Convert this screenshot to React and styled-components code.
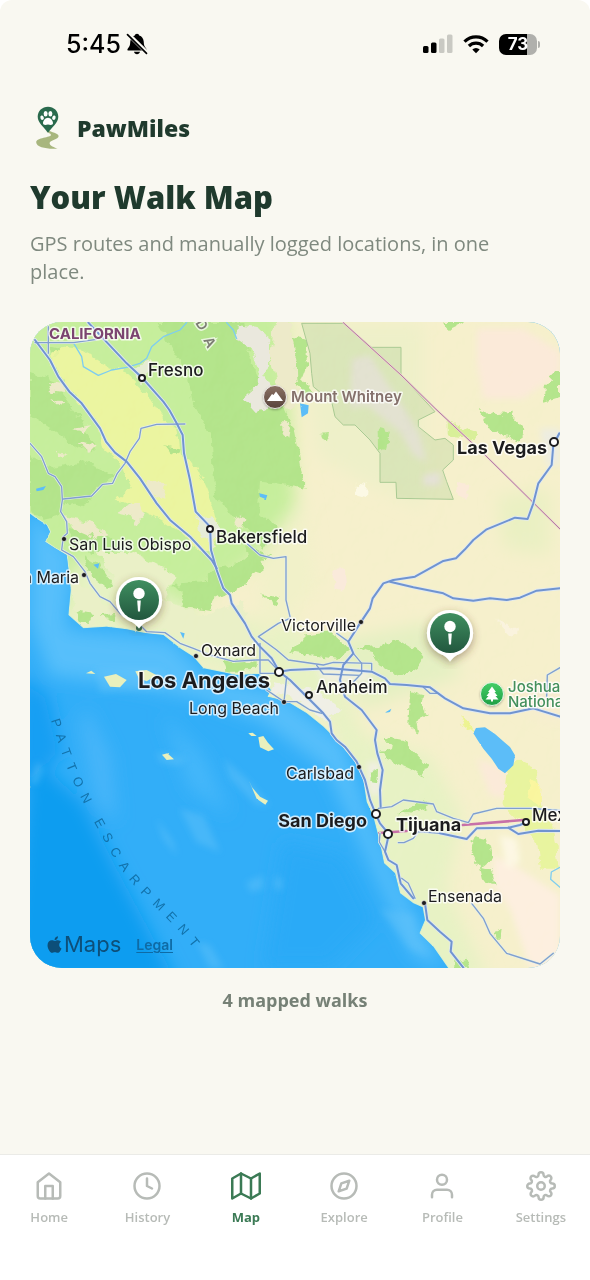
import React from "react";
import styled, { createGlobalStyle } from "styled-components";
import { FiHome, FiClock, FiMap, FiCompass, FiUser, FiSettings } from "react-icons/fi";
import { FaApple } from "react-icons/fa";

const GlobalStyle = createGlobalStyle`
  *, *::before, *::after { box-sizing: border-box; }
  body {
    margin: 0;
    background: #fff;
    color: #1f3a2d;
    font-family: "Open Sans", "Noto Sans", sans-serif;
  }
`;

const Screen = styled.div`
  min-height: 100vh;
  display: flex;
  flex-direction: column;
  background: #f9f8f1;
  border-radius: 12px 12px 0 0;
`;

const StatusBar = styled.div`
  display: flex;
  justify-content: space-between;
  align-items: center;
  height: 88px;
  padding: 0 50px 0 66px;
  color: #000;
  font-family: Inter, sans-serif;
`;

const StatusGroup = styled.div`
  display: flex;
  align-items: center;
  gap: ${(p) => p.$gap}px;
`;

const Clock = styled.time`
  font-size: 25px;
  line-height: 32px;
  font-weight: 500;
`;

const Battery = styled.div`
  display: flex;
  align-items: center;
  gap: 1px;

  &::after {
    content: "";
    width: 2px;
    height: 7px;
    border-radius: 0 3px 3px 0;
    background: #b0b0ac;
  }
`;

const BatteryBody = styled.div`
  width: 38px;
  height: 21px;
  border-radius: 7px;
  background: linear-gradient(to right, #000 73%, #b0b0ac 73%);
  color: #fff;
  font-size: 17px;
  line-height: 21px;
  font-weight: 700;
  text-align: center;
`;

const Main = styled.main`
  flex: 1;
  display: flex;
  flex-direction: column;
  padding: 16px 30px 0;
`;

const Brand = styled.div`
  display: flex;
  align-items: center;
  gap: 11px;
  height: 48px;
`;

const BrandName = styled.span`
  font-size: 23px;
  line-height: 32px;
  font-weight: 800;
`;

const Title = styled.h1`
  margin: 24px 0 0;
  font-size: 31px;
  line-height: 42px;
  font-weight: 800;
`;

const Lead = styled.p`
  margin: 12px 0 0;
  padding-right: 24px;
  color: #7f897f;
  font-size: 20px;
  line-height: 28px;
`;

const MapCard = styled.section`
  position: relative;
  margin-top: 36px;
  border-radius: 32px;
  overflow: hidden;
  aspect-ratio: 530 / 646;
  background: #2caaf7;
`;

const MapSvg = styled.svg`
  display: block;
  width: 100%;
  height: 100%;
`;

const PlaceText = styled.text`
  font-family: Inter, sans-serif;
  font-size: ${(p) => p.$size}px;
  font-weight: ${(p) => p.$weight};
  fill: ${(p) => p.$color || "#1c1c1e"};
  stroke: rgba(255, 255, 255, 0.75);
  stroke-width: 3px;
  stroke-linejoin: round;
  paint-order: stroke;
`;

const SeaText = styled.text`
  font-family: "Liberation Sans", sans-serif;
  font-size: 13px;
  letter-spacing: 8px;
  fill: #1272ab;
`;

const RangeText = styled.text`
  font-family: Inter, sans-serif;
  font-size: 14px;
  font-weight: 600;
  fill: #7d7d74;
  stroke: rgba(255, 255, 255, 0.7);
  stroke-width: 3px;
  paint-order: stroke;
`;

const PinButton = styled.button`
  position: absolute;
  left: ${(p) => p.$left}%;
  top: ${(p) => p.$top}%;
  width: 64px;
  height: 68px;
  margin: -32px 0 0 -32px;
  padding: 0;
  border: 0;
  background: none;
`;

const Attribution = styled.div`
  position: absolute;
  left: 15px;
  bottom: 8px;
  display: flex;
  align-items: center;
  gap: 15px;
  color: #0d4f79;
  font-family: Inter, sans-serif;
`;

const MapsMark = styled.span`
  display: flex;
  align-items: center;
  font-size: 22px;
  line-height: 32px;
`;

const LegalLink = styled.a`
  margin-top: 2px;
  color: #0f6ba5;
  font-size: 14px;
  line-height: 20px;
  font-weight: 600;
  text-decoration: underline;
  text-underline-offset: 2px;
`;

const Count = styled.p`
  margin: 20px 0 24px;
  color: #768176;
  font-size: 18px;
  line-height: 24px;
  font-weight: 700;
  text-align: center;
`;

const TabBar = styled.nav`
  display: grid;
  grid-template-columns: repeat(6, 1fr);
  height: 126px;
  padding-top: 16px;
  border-top: 1px solid #ebebe7;
  background: #fff;
`;

const Tab = styled.a`
  display: flex;
  flex-direction: column;
  align-items: center;
  gap: 7px;
  color: ${(p) => (p.$active ? "#3b7a55" : "#b7bbb7")};
  font-size: 13px;
  line-height: 18px;
  font-weight: ${(p) => (p.$active ? 700 : 600)};
  text-decoration: none;
`;

function BellOff() {
  return (
    <svg width="22" height="22" viewBox="0 0 22 22" aria-hidden="true">
      <path
        d="M11 .8c1.200 0 2 .7 2.200 1.700 2.700.8 4.300 3 4.500 6 .2 3.700.7 5.200 2.400 6.900.9.9.6 2.100-.7 2.100H2.600c-1.300 0-1.600-1.200-.7-2.100 1.700-1.700 2.200-3.200 2.400-6.900.2-3 1.800-5.200 4.500-6C9 1.500 9.800.8 11 .8ZM8 18.800h6c-.3 1.600-1.500 2.500-3 2.500s-2.700-.9-3-2.500Z"
        fill="#000"
      />
      <path d="M1.600.6 21.600 20.200" stroke="#f9f8f1" strokeWidth="4.200" />
      <path d="M1.500 1.700 20.500 20.300" stroke="#000" strokeWidth="1.700" strokeLinecap="round" />
    </svg>
  );
}

function Signal() {
  return (
    <svg width="30" height="20" viewBox="0 0 30 20" aria-hidden="true">
      <rect x="0" y="12" width="5.500" height="7" rx="1.500" />
      <rect x="8" y="8.500" width="5.500" height="10.500" rx="1.500" />
      <rect x="16" y="4.500" width="5.500" height="14.500" rx="1.500" fill="#c9c9c3" />
      <rect x="24" y="0.500" width="5.500" height="18.500" rx="1.500" fill="#c9c9c3" />
    </svg>
  );
}

function Wifi() {
  return (
    <svg width="26" height="20" viewBox="0 0 26 20" fill="none" stroke="#000" strokeWidth="3.200" aria-hidden="true">
      <path d="M1.500 7.600a16.400 16.400 0 0 1 23 0" />
      <path d="M5.900 12a10.100 10.100 0 0 1 14.200 0" />
      <path d="M9.300 15.400a5.300 5.300 0 0 1 7.400 0L13 19.200Z" fill="#000" stroke="none" />
    </svg>
  );
}

function Logo() {
  return (
    <svg width="36" height="44" viewBox="0 0 36 44" aria-hidden="true">
      <path
        d="M18 24c3 2.500 10.600 3 10.600 6.200 0 3-8.800 4-9 6.800-.2 2.800 5 4.500 8 5.600-9.500.8-21.400-1-21.400-6.300C6.200 31.500 21 31.500 21 29c0-1.800-3.800-2.200-4.500-4Z"
        fill="#a8b67e"
      />
      <path d="M18 .8c5.800 0 10.300 4.200 10.300 10 0 6.300-6.300 10.200-10.300 16-4-5.800-10.300-9.700-10.300-16C7.700 5 12.200.8 18 .8Z" fill="#2a6a4d" />
      <g fill="#fff">
        <ellipse cx="15.600" cy="7.800" rx="2" ry="2.700" />
        <ellipse cx="20.400" cy="7.800" rx="2" ry="2.700" />
        <ellipse cx="12.100" cy="11.700" rx="1.700" ry="2.200" transform="rotate(-18 12.100 11.700)" />
        <ellipse cx="23.900" cy="11.700" rx="1.700" ry="2.200" transform="rotate(18 23.900 11.700)" />
        <path d="M18 11.800c2.600 0 5 3.200 5 5.200 0 2.400-2.700 2-5 1.500-2.300.5-5 .9-5-1.500 0-2 2.400-5.200 5-5.200Z" />
      </g>
    </svg>
  );
}

function Pin({ label, left, top }) {
  return (
    <PinButton type="button" aria-label={label} $left={left} $top={top}>
      <svg width="64" height="68" viewBox="0 0 64 68" aria-hidden="true">
        <g filter="url(#pinShadow)">
          <path d="M32 9a23 23 0 0 1 8.500 44.400c-3.200 1.300-5.500 3-8.500 7-3-4-5.300-5.700-8.500-7A23 23 0 0 1 32 9Z" fill="#fff" />
        </g>
        <circle cx="32" cy="32" r="20" fill="url(#pinFill)" />
        <circle cx="32" cy="25.500" r="5.700" fill="#fff" />
        <path d="M30.200 32.600h3.600l-.8 11h-2Z" fill="#fff" />
      </svg>
    </PinButton>
  );
}

const roads = [
  "M15 54 60 114 85 164 118 209 155 244 210 319 228 359 255 392 290 419 330 469 380 544 420 594 480 644 545 714 560 739",
  "M175 2 290 124 338 169 400 239 418 264 440 304 458 339 462 394 480 474 497 569 540 614 543 684 560 744 580 799 600 819 605 844 645 904 665 944 690 974 725 1009 748 1049",
  "M1588 334 1570 369 1565 429 1525 484 1510 544 1493 591 1455 587 1370 622 1330 654 1305 682 1278 709 1240 717 1155 764 1090 774 1060 784 1028 829 1020 859 990 904 955 959 970 994 940 1029 930 1074 945 1124 995 1164 1040 1224 1035 1254 1042 1294 1058 1344 1050 1404 1052 1454",
  "M1080 779 1150 796 1240 814 1270 829 1330 836 1380 829 1430 834 1470 827 1520 806 1590 799",
  "M748 1049 780 1044 900 1039 1025 1049 1065 1069 1080 1086 1130 1089 1200 1096 1245 1129 1300 1159 1380 1174 1440 1174 1510 1159 1590 1184",
  "M748 1049 780 1074 850 1144 880 1174 900 1199 905 1234 920 1254 945 1274 980 1319 1005 1374 1020 1434 1037 1476 1050 1504 1075 1534",
  "M1230 1534 1310 1551 1340 1519 1435 1517 1470 1509 1488 1501",
  "M1435 1517 1465 1536 1525 1526 1590 1527",
  "M1075 1544 1065 1589 1075 1614 1100 1629 1112 1684 1150 1729",
  "M1185 1744 1192 1794 1230 1829 1265 1859 1262 1889 1300 1937",
];

const minorRoads = [
  "M15 62H130L200 52M55 14V94",
  "M465 306 380 307 333 319 328 349 300 389 285 424 262 454 248 484 218 487 185 522 100 531",
  "M0 364 35 404 55 454 75 464 95 494 97 534 92 569 110 599 112 634 100 644 95 684 130 704 165 749 180 784 210 824 240 839 270 874 330 909 350 929 405 932 450 964 490 979 540 999 610 1018 680 1014 715 1014 748 1049",
  "M650 664 690 699 730 709 768 704 768 834 780 884",
  "M780 889 745 904 685 944 740 984 775 1014 880 1029 910 1021 1025 1024V1044",
  "M690 964V1054H748M770 1064 762 1139 800 1139 840 1164 875 1174M710 1104 762 1139",
  "M920 934 955 959M970 994 995 1024V1054L970 1080M860 1030 880 1056 990 1060",
  "M1180 1096 1200 1114H1220",
  "M1550 1124 1552 1059 1590 1037",
  "M1045 1459 1085 1454 1120 1434 1210 1446 1220 1469 1270 1489 1315 1502 1330 1476 1400 1459 1500 1459 1590 1465",
  "M1050 1534 1048 1560 1065 1589M1115 1669 1135 1684 1155 1729",
  "M1105 1562H1122L1150 1549 1165 1529 1230 1534",
  "M1325 1744 1360 1789 1380 1834 1430 1894 1530 1926 1570 1894",
];

const rivers = [
  "M130 62 155 104 160 134 205 160 245 144 290 136 330 124 350 109 365 74 400 44 450 24 470 2",
  "M590 2 610 24 620 50",
  "M1590 1636 1564 1650 1562 1672 1590 1696",
];

const groves = [
  "M380 0H640L650 60 670 140 700 200 760 255 790 320 800 370 812 440 830 500 750 485 690 480 684 560 740 620 700 680 640 600 600 580 560 520 552 470 545 340 488 240 470 150Z",
  "M780 40 830 50 830 130 815 170 850 210 820 230 790 150Z",
  "M0 150 60 170 140 280 190 360 200 390 130 370 80 330 0 280Z",
  "M0 400 70 440 160 420 260 460 240 480 200 500 160 560 120 540 90 580 40 590 0 565Z",
  "M110 620 170 630 240 640 290 680 240 690 180 690 130 660Z",
  "M60 70 100 80 96 100 66 96Z",
  "M160 700 210 730 250 790 230 800 180 760Z",
  "M430 790 520 780 560 740 620 730 680 680 700 740 620 800 560 830 540 864 450 850 460 820Z",
  "M650 670 720 700 690 730 660 710Z",
  "M690 820 750 824 740 850Z",
  "M780 990 830 940 900 930 960 980 920 1010 840 1000Z",
  "M980 980 1050 970 1110 954 1180 1000 1160 1030 1110 1064 1050 1030 1030 996Z",
  "M1140 1110 1180 1120 1175 1150 1190 1180 1160 1200 1165 1230 1135 1210Z",
  "M580 1020 680 1018 680 1046 590 1050Z",
  "M140 870 190 880 180 900 150 894Z",
  "M210 880 260 876 250 894Z",
  "M400 370 450 380 440 400 420 396Z",
  "M1060 1244 1120 1254 1150 1290 1190 1330 1180 1370 1140 1340 1070 1310 1050 1290 1090 1280Z",
  "M1020 1350 1050 1340 1048 1384 1018 1380Z",
  "M1100 1480 1190 1430 1200 1450 1140 1480Z",
  "M1320 1590 1340 1544 1370 1550 1385 1610 1350 1640Z",
  "M1350 1640 1390 1650 1400 1690 1360 1680Z",
  "M1390 1830 1415 1824 1412 1850 1394 1850Z",
  "M1270 1920 1310 1910 1320 1938H1270Z",
  "M1350 260 1400 280 1440 275 1480 320 1470 360 1420 340 1380 320Z",
  "M1590 145 1545 190 1540 240 1590 225Z",
  "M1230 0H1310L1260 24Z",
  "M865 338 900 336 894 358Z",
];

const tanPatches = [
  "M735 0 780 0 800 120 805 250 770 260 740 180 720 100Z",
  "M50 180 100 190 96 210 60 204Z",
  "M60 230 100 240 90 252Z",
  "M130 320 180 310 170 334Z",
  "M140 360 200 370 180 390Z",
  "M80 390 115 396 84 408Z",
  "M100 585 180 600 240 640 200 650 130 620Z",
  "M260 570 325 540 345 580 320 610 300 580Z",
  "M355 480 410 484 400 530 350 510Z",
  "M760 290 780 310 775 350 760 330Z",
  "M620 580 650 590 640 620 610 610Z",
];

const islands = [
  "M222 1064 258 1056 290 1074 270 1096 240 1094Z",
  "M168 1054 184 1046 196 1056Z",
  "M316 1048 350 1044 380 1060 350 1078 326 1068Z",
  "M396 1298 412 1294 432 1312 410 1314Z",
  "M685 1246 700 1242 714 1262 732 1282 715 1288 690 1276Z",
  "M655 1234 668 1232 680 1242 664 1242Z",
  "M657 1376 666 1396 690 1424 714 1436 706 1448 680 1430Z",
];

const places = [
  ["CALIFORNIA", 19, 17, 15, 700, "start", "#7b4470"],
  ["Fresno", 118, 54, 17, 500],
  ["Bakersfield", 186, 221, 17, 500],
  ["Mount Whitney", 261, 80, 15, 600, "start", "#85716c"],
  ["Las Vegas", 517, 132, 18, 700, "end"],
  ["San Luis Obispo", 39, 228, 16, 400],
  ["Santa Maria", 49, 261, 16, 400, "end"],
  ["Victorville", 326, 309, 16, 400, "end"],
  ["Oxnard", 171, 334, 16, 400],
  ["Los Angeles", 240, 366, 22, 700, "end"],
  ["Anaheim", 286, 371, 17, 500],
  ["Long Beach", 249, 392, 16, 400, "end"],
  ["Carlsbad", 324, 457, 16, 400, "end"],
  ["San Diego", 337, 505, 18, 700, "end"],
  ["Tijuana", 366, 509, 18, 700],
  ["Mexicali", 502, 499, 17, 500],
  ["Ensenada", 398, 580, 16, 400],
  ["Joshua Tree", 478, 370, 15, 500, "start", "#43905c"],
  ["National Park", 478, 385, 15, 500, "start", "#43905c"],
];

const rings = [[112, 56, 3], [180, 207, 3], [524, 120, 4], [249, 350, 4], [279, 373, 3], [346, 492, 4], [358, 512, 4], [496, 500, 3]];
const dots = [[34, 217], [54, 253], [331, 300], [166, 334], [254, 380], [329, 445], [394, 581]];

const coast =
  "M0 575 20 590 50 609 60 629 45 659 75 679 110 699 118 764 122 804 115 879 160 919 230 914 290 922 340 932 400 939 450 979 490 1004 520 1039 620 1059 690 1056 722 1104 712 1124 770 1138 830 1174 880 1214 920 1254 975 1320 1000 1374 1010 1440 1030 1484 1048 1554 1062 1624 1095 1654 1110 1714 1150 1744 1178 1756 1185 1794 1168 1834 1210 1874 1255 1939H0Z";

function RegionMap() {
  return (
    <MapSvg viewBox="0 0 530 646" preserveAspectRatio="xMidYMid slice" role="img" aria-label="Map of Southern California">
      <defs>
        <linearGradient id="pinFill" x1="0" y1="0" x2="0" y2="1">
          <stop offset="0" stopColor="#3f8f60" />
          <stop offset="1" stopColor="#22573e" />
        </linearGradient>
        <linearGradient id="parkBadge" x1="0" y1="0" x2="0" y2="1">
          <stop offset="0" stopColor="#45cf68" />
          <stop offset="1" stopColor="#1f9f45" />
        </linearGradient>
        <linearGradient id="peakBadge" x1="0" y1="0" x2="0" y2="1">
          <stop offset="0" stopColor="#8a7164" />
          <stop offset="1" stopColor="#59443b" />
        </linearGradient>
        <filter id="pinShadow" x="-30%" y="-30%" width="160%" height="170%">
          <feDropShadow dx="0" dy="3" stdDeviation="4" floodColor="#5c3b20" floodOpacity="0.45" />
        </filter>
        <filter id="badgeShadow" x="-30%" y="-30%" width="160%" height="170%">
          <feDropShadow dx="0" dy="1" stdDeviation="1" floodOpacity="0.3" />
        </filter>
        <filter id="soft" x="-30%" y="-30%" width="160%" height="160%">
          <feGaussianBlur stdDeviation="26" />
        </filter>
        <filter id="softer" x="-30%" y="-30%" width="160%" height="160%">
          <feGaussianBlur stdDeviation="10" />
        </filter>
        <filter id="ragged" x="-5%" y="-5%" width="110%" height="110%">
          <feTurbulence type="fractalNoise" baseFrequency="0.035" numOctaves="3" seed="4" />
          <feDisplacementMap in="SourceGraphic" scale="30" xChannelSelector="R" yChannelSelector="G" />
        </filter>
        <filter id="coastEdge" x="-5%" y="-5%" width="110%" height="110%">
          <feTurbulence type="fractalNoise" baseFrequency="0.080" numOctaves="2" seed="9" />
          <feDisplacementMap in="SourceGraphic" scale="5" xChannelSelector="R" yChannelSelector="G" />
        </filter>
        <filter id="relief" x="0" y="0" width="100%" height="100%">
          <feTurbulence type="fractalNoise" baseFrequency="0.014 0.010" numOctaves="4" seed="12" result="noise" />
          <feDiffuseLighting in="noise" surfaceScale="14" lightingColor="#ffffff">
            <feDistantLight azimuth="225" elevation="60" />
          </feDiffuseLighting>
        </filter>
        <clipPath id="seaClip">
          <path d={coast} />
        </clipPath>
        <path id="escarpment" d="M21 398C30 426 36 446 48 470S70 510 80 529 106 567 124 584 150 609 176 642" />
      </defs>

      <g transform="scale(0.33333)">
        <rect width="1590" height="1938" fill="#f5efc9" />
        <g filter="url(#soft)">
          <path d="M-60 -60H760L800 600 700 700 400 900 100 880 -60 600Z" fill="#c3ed97" />
          <path d="M300 740 500 880 780 900 900 1000 1000 1240 1200 1300 1300 1480 1250 1700 1380 1980H1140L900 1200 600 1060 100 900 130 720Z" fill="#e6f1c1" />
          <path d="M680 700 820 520 860 800 700 960Z" fill="#f0f0c6" />
          <path d="M800 0H1180V560L1000 480 860 400Z" fill="#edefc6" />
          <path d="M900 960 1200 900 1300 1060 1000 1160Z" fill="#e3efbf" />
          <path d="M1400 520 1560 500V700L1420 680Z" fill="#e9efc0" />
          <path d="M1490 1090H1590V1200L1480 1150Z" fill="#f8ead0" />
        </g>
        <g filter="url(#softer)">
          <path d="M1340 20H1480L1590 90V150L1520 200 1480 230H1360L1340 120Z" fill="#fbe9d7" />
          <path d="M1340 1310 1420 1340 1440 1430 1380 1420Z" fill="#fbe9d7" />
          <path d="M1390 1600 1470 1640 1590 1720V1938H1500L1440 1760 1390 1690Z" fill="#fdeedd" />
          <path d="M1410 1540 1460 1550 1470 1620 1430 1640Z" fill="#fdf7e2" />
          <path d="M1010 1320H1050V1420H1020Z" fill="#efeee0" />
          <path d="M1530 320H1590V430H1550Z" fill="#ececdf" />
          <path d="M860 1040H1020V1080H880Z" fill="#efefde" />
        </g>
        <g filter="url(#ragged)">
          <g fill="#b0e386">{groves.map((d) => <path key={d} d={d} />)}</g>
          <path d="M95 74 150 80 215 124 290 154 350 214 390 280 440 320 450 400 500 434 530 500 550 560 570 640 540 690 500 690 460 640 400 600 330 560 260 530 300 500 270 420 215 370 200 300 120 210 60 110Z" fill="#eaf49b" />
          <path d="M200 690 300 690 400 740 440 770 400 830 520 880 640 840 680 1010 540 1000 420 930 240 880 270 800Z" fill="#e9efc4" />
          <path d="M120 760 200 820 260 880 180 910 130 860Z" fill="#e9efc4" />
          <path d="M400 370 450 380 440 400 420 396ZM140 870 190 880 180 900 150 894ZM210 880 260 876 250 894Z" fill="#b0e386" />
          <g fill="#ece9c6">{tanPatches.map((d) => <path key={d} d={d} />)}</g>
          <path d="M1430 1344 1460 1314 1520 1344 1535 1454 1570 1514 1590 1640 1530 1640 1520 1554 1500 1534 1420 1454Z" fill="#e7f39a" />
          <path d="M1500 1370 1535 1400 1530 1450 1490 1430Z" fill="#faf59a" />
          <path d="M1250 300 1340 330 1335 350 1250 340Z" fill="#d6ee93" />
          <path d="M1290 1180 1320 1200 1340 1240 1300 1210Z" fill="#ecf38d" />
          <path d="M620 10 700 20 720 60 720 130 700 160 730 210 715 260 680 270 640 225 680 190 690 140 665 80 620 50Z" fill="#e9e7db" />
          <path d="M325 120 365 112 360 150 335 190 315 150Z" fill="#e5ebd2" />
          <path d="M500 590 540 580 570 620 550 670 510 640Z" fill="#e5ebd6" />
          <path d="M910 744 945 740 948 800 914 804Z" fill="#fae9d9" />
          <path d="M1395 890 1460 920 1445 944Z" fill="#faf2dc" />
          <path d="M980 482 1012 486 1008 528 980 520Z" fill="#fcf9e4" />
          <path d="M1280 480 1316 486 1310 530 1280 520Z" fill="#fbe9d7" />
          <path d="M730 1080 780 1090 850 1100 930 1160 890 1200 820 1150 770 1120 720 1110Z" fill="#efeee4" />
        </g>
        <path
          d="M815 4H940L1025 76H1113V159L1215 269 1165 294V314L1215 354 1245 349 1270 369V414L1238 444 1250 479 1270 532 1100 529 1098 481H1050V394L1020 354 975 309H940L915 284 905 239 850 194 845 154 840 94Z"
          fill="#b9d59b"
          fillOpacity="0.4"
          stroke="#a5c78e"
          strokeWidth="3"
        />
        <g filter="url(#softer)" fill="#e3dfd5">
          <path d="M965 110 1020 100 1070 180 1130 270 1170 340 1190 420 1150 400 1110 330 1010 250 960 260Z" fillOpacity="0.8" />
          <path d="M1180 460 1230 450 1230 490 1180 490Z" />
        </g>
        <path d="M1043 330 1068 312 1078 340 1068 380 1044 388Z" fill="#b0e386" filter="url(#ragged)" />
        <rect width="1590" height="1938" filter="url(#relief)" opacity="0.13" style={{ mixBlendMode: "soft-light" }} />

        <path d={coast} fill="#d7efd0" stroke="#d7efd0" strokeWidth="6" filter="url(#coastEdge)" />
        <path d={coast} fill="#31aef8" filter="url(#coastEdge)" />
        <g clipPath="url(#seaClip)">
          <g filter="url(#soft)">
            <path d="M0 560 130 700 110 920 420 950 540 1070 740 1110 940 1260 1020 1500 1120 1720 1240 1938 1150 1900 1010 1600 890 1340 700 1200 520 1130 300 1090 60 1060 0 900Z" fill="#56bffb" />
            <path d="M0 1300 160 1440 260 1640 440 1980H-60Z" fill="#0b9df0" />
            <path d="M-40 1050 60 1120 100 1300 -40 1400Z" fill="#189ff3" />
            <path d="M400 1180 520 1300 600 1480 480 1400Z" fill="#45b7fa" />
            <path d="M760 1560 940 1600 1040 1800 900 1938H700Z" fill="#29aaf7" />
            <path d="M170 1160 240 1300 260 1500 200 1440 150 1200Z" fill="#48b6f9" />
          </g>
          <g filter="url(#softer)" fill="#68c5fb" fillOpacity="0.4">
            <path d="M450 1460 520 1480 570 1590 500 1560Z" />
            <path d="M580 1310 650 1370 720 1450 680 1450 600 1370Z" />
            <path d="M20 1320 40 1340 20 1390 0 1380Z" />
            <path d="M380 1290 470 1310 440 1330 390 1320Z" />
            <path d="M200 1040 400 1040 400 1100 210 1110Z" />
            <path d="M740 1660 760 1680 750 1710 730 1690Z" />
            <path d="M380 1490 430 1560 440 1600 400 1550Z" />
            <path d="M650 1680 700 1660 700 1700 660 1710Z" />
            <path d="M500 1860 540 1870 580 1938H540Z" />
            <path d="M1050 1760 1150 1780 1160 1850 1200 1900 1140 1880Z" />
          </g>
          <g fill="#e9f0bd" filter="url(#coastEdge)">{islands.map((d) => <path key={d} d={d} />)}</g>
        </g>

        <g fill="#5bbdf8" filter="url(#coastEdge)">
          <path d="M1330 1234 1338 1218 1365 1216 1395 1236 1425 1262 1440 1275 1455 1300 1450 1330 1425 1354 1405 1340 1385 1310 1360 1280 1345 1258Z" />
          <path d="M810 244 836 250 834 274 815 286Z" />
          <path d="M18 500 48 492 40 504 20 508Z" />
          <path d="M688 514 712 520 708 532 690 524Z" />
          <path d="M190 728 208 724 204 740Z" />
          <path d="M450 930 464 934 460 950Z" />
          <path d="M1064 1172 1084 1160 1080 1170Z" />
        </g>

        <g fill="none" strokeLinejoin="round" strokeLinecap="round">
          <g stroke="#7ecdf0" strokeWidth="4">{rivers.map((d) => <path key={d} d={d} />)}</g>
          <path d="M940 2 1113 159 1215 259 1365 399 1510 542 1590 621" stroke="#e9d3cf" strokeWidth="6" />
          <path d="M940 2 1113 159 1215 259 1365 399 1510 542 1590 621" stroke="#b5799d" strokeWidth="3" />
          <path d="M1048 1533 1130 1527M1298 1509 1480 1494" stroke="#c771a8" strokeWidth="8" />
          <g stroke="#e5efe6" strokeWidth="8">{minorRoads.map((d) => <path key={d} d={d} />)}</g>
          <g stroke="#dfe9f2" strokeWidth="11">{roads.map((d) => <path key={d} d={d} />)}</g>
          <g stroke="#809fce" strokeWidth="4">{minorRoads.map((d) => <path key={d} d={d} />)}</g>
          <g stroke="#7094d0" strokeWidth="6">{roads.map((d) => <path key={d} d={d} />)}</g>
        </g>
      </g>

      <SeaText>
        <textPath href="#escarpment">PATTON ESCARPMENT</textPath>
      </SeaText>
      <RangeText transform="translate(165 1) rotate(58)">D</RangeText>
      <RangeText transform="translate(173 18) rotate(62)">A</RangeText>

      <g fill="#fff" stroke="#1c1c1e" strokeWidth="2">
        {rings.map(([x, y, r]) => <circle key={`${x}-${y}`} cx={x} cy={y} r={r} />)}
      </g>
      <g fill="#1c1c1e" stroke="#fff" strokeOpacity="0.6" strokeWidth="1">
        {dots.map(([x, y]) => <circle key={`${x}-${y}`} cx={x} cy={y} r="2.500" />)}
      </g>
      <circle cx="109" cy="306" r="3" fill="#2f6c4b" />

      {places.map(([name, x, y, size, weight, anchor, color]) => (
        <PlaceText key={name} x={x} y={y} textAnchor={anchor || "start"} $size={size} $weight={weight} $color={color}>
          {name}
        </PlaceText>
      ))}

      <g filter="url(#badgeShadow)">
        <circle cx="245" cy="75" r="11.500" fill="url(#peakBadge)" stroke="#fff" strokeOpacity="0.8" />
        <path d="M237 79 242 72 243.500 73 246 69.500 253 79Z" fill="#fff" />
        <circle cx="462" cy="372" r="11.500" fill="url(#parkBadge)" stroke="#fff" strokeOpacity="0.8" />
        <path d="M462 364.500 466 370H464.500L467.500 374H465.500L468.500 377.500H463V379.500H461V377.500H455.500L458.500 374H456.500L459.500 370H458Z" fill="#fff" />
      </g>
    </MapSvg>
  );
}

const tabs = [
  { label: "Home", Icon: FiHome },
  { label: "History", Icon: FiClock },
  { label: "Map", Icon: FiMap, active: true },
  { label: "Explore", Icon: FiCompass },
  { label: "Profile", Icon: FiUser },
  { label: "Settings", Icon: FiSettings },
];

export default function App() {
  return (
    <>
      <GlobalStyle />
      <Screen>
        <StatusBar>
          <StatusGroup $gap={5}>
            <Clock>5:45</Clock>
            <BellOff />
          </StatusGroup>
          <StatusGroup $gap={10}>
            <Signal />
            <Wifi />
            <Battery>
              <BatteryBody>73</BatteryBody>
            </Battery>
          </StatusGroup>
        </StatusBar>
        <Main>
          <Brand>
            <Logo />
            <BrandName>PawMiles</BrandName>
          </Brand>
          <Title>Your Walk Map</Title>
          <Lead>GPS routes and manually logged locations, in one place.</Lead>
          <MapCard>
            <RegionMap />
            <Pin label="Walk near Santa Barbara" left={20.6} top={43} />
            <Pin label="Walk in the Mojave Desert" left={79.2} top={48.2} />
            <Attribution>
              <MapsMark>
                <FaApple size={19} aria-hidden="true" />
                Maps
              </MapsMark>
              <LegalLink href="#legal">Legal</LegalLink>
            </Attribution>
          </MapCard>
          <Count>4 mapped walks</Count>
        </Main>
        <TabBar>
          {tabs.map(({ label, Icon, active }) => (
            <Tab key={label} href={`#${label.toLowerCase()}`} $active={active} aria-current={active ? "page" : undefined}>
              <Icon size={30} aria-hidden="true" />
              {label}
            </Tab>
          ))}
        </TabBar>
      </Screen>
    </>
  );
}
